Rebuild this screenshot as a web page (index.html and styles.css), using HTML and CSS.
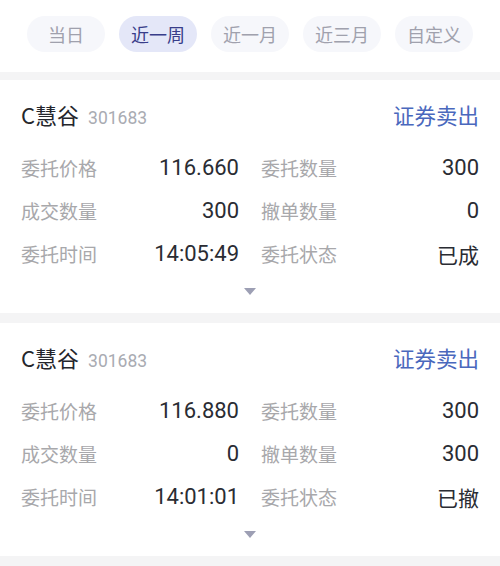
FILE: index.html
```html
<!DOCTYPE html>
<html lang="zh">
<head>
<meta charset="utf-8">
<link rel="stylesheet" href="styles.css">
</head>
<body>
<div class="tabs">
  <span class="tab">当日</span>
  <span class="tab active">近一周</span>
  <span class="tab">近一月</span>
  <span class="tab">近三月</span>
  <span class="tab">自定义</span>
</div>
<div class="sep sep-top"></div>
<div class="card">
  <div class="head">
    <div class="name">C慧谷<span class="code">301683</span></div>
    <div class="type">证券卖出</div>
  </div>
  <div class="grid">
    <div class="cell"><span class="label">委托价格</span><span class="val">116.660</span></div>
    <div class="cell"><span class="label">委托数量</span><span class="val">300</span></div>
    <div class="cell"><span class="label">成交数量</span><span class="val">300</span></div>
    <div class="cell"><span class="label">撤单数量</span><span class="val">0</span></div>
    <div class="cell"><span class="label">委托时间</span><span class="val">14:05:49</span></div>
    <div class="cell"><span class="label">委托状态</span><span class="val cjk">已成</span></div>
  </div>
  <div class="more"><span class="tri"></span></div>
</div>
<div class="sep"></div>
<div class="card">
  <div class="head">
    <div class="name">C慧谷<span class="code">301683</span></div>
    <div class="type">证券卖出</div>
  </div>
  <div class="grid">
    <div class="cell"><span class="label">委托价格</span><span class="val">116.880</span></div>
    <div class="cell"><span class="label">委托数量</span><span class="val">300</span></div>
    <div class="cell"><span class="label">成交数量</span><span class="val">0</span></div>
    <div class="cell"><span class="label">撤单数量</span><span class="val">300</span></div>
    <div class="cell"><span class="label">委托时间</span><span class="val">14:01:01</span></div>
    <div class="cell"><span class="label">委托状态</span><span class="val cjk">已撤</span></div>
  </div>
  <div class="more"><span class="tri"></span></div>
</div>
<div class="sep"></div>
</body>
</html>
```
FILE: styles.css
```css
* { box-sizing: border-box; }
html, body { margin: 0; padding: 0; background: #ffffff; }
body {
  font-family: Roboto, "Noto Sans CJK SC", sans-serif;
  width: 500px;
  overflow: hidden;
}
.tabs {
  display: flex;
  gap: 14px;
  padding: 16px 0 0 27px;
  height: 72px;
}
.tab {
  width: 78px;
  height: 36px;
  border-radius: 18px;
  background: #f6f7fb;
  color: #a0a1ad;
  font-size: 18px;
  display: flex;
  align-items: center;
  justify-content: center;
  font-family: "Noto Sans CJK SC", sans-serif;
}
.tab.active {
  background: #e4e7f8;
  color: #383d8a;
}
.sep { height: 10px; background: #f4f4f5; }
.sep-top { height: 8px; }
.card {
  height: 233px;
  padding: 19px 21px 0;
}
.head {
  display: flex;
  justify-content: space-between;
  align-items: center;
  height: 30px;
}
.name {
  font-size: 22px;
  color: #24262c;
  display: flex;
  align-items: baseline;
  font-family: "Noto Sans CJK SC", sans-serif;
}
.code {
  font-family: Roboto, sans-serif;
  font-size: 17.5px;
  color: #a9abb2;
  margin-left: 9px;
}
.type {
  font-size: 21.5px;
  color: #4a68bd;
  font-family: "Noto Sans CJK SC", sans-serif;
}
.grid {
  margin-top: 17px;
  display: grid;
  grid-template-columns: 1fr 1fr;
  column-gap: 22px;
}
.cell {
  height: 43px;
  display: flex;
  justify-content: space-between;
  align-items: center;
}
.label {
  font-size: 19px;
  color: #a8a8ab;
  font-family: "Noto Sans CJK SC", sans-serif;
}
.val {
  font-size: 22px;
  color: #2a2c33;
  font-family: Roboto, "Noto Sans CJK SC", sans-serif;
}
.val.cjk {
  font-size: 21px;
  font-family: "Noto Sans CJK SC", sans-serif;
}
.more {
  display: flex;
  justify-content: center;
  margin-top: 13px;
}
.tri {
  width: 0;
  height: 0;
  border-left: 6px solid transparent;
  border-right: 6px solid transparent;
  border-top: 7px solid #9d9fb4;
}
```
